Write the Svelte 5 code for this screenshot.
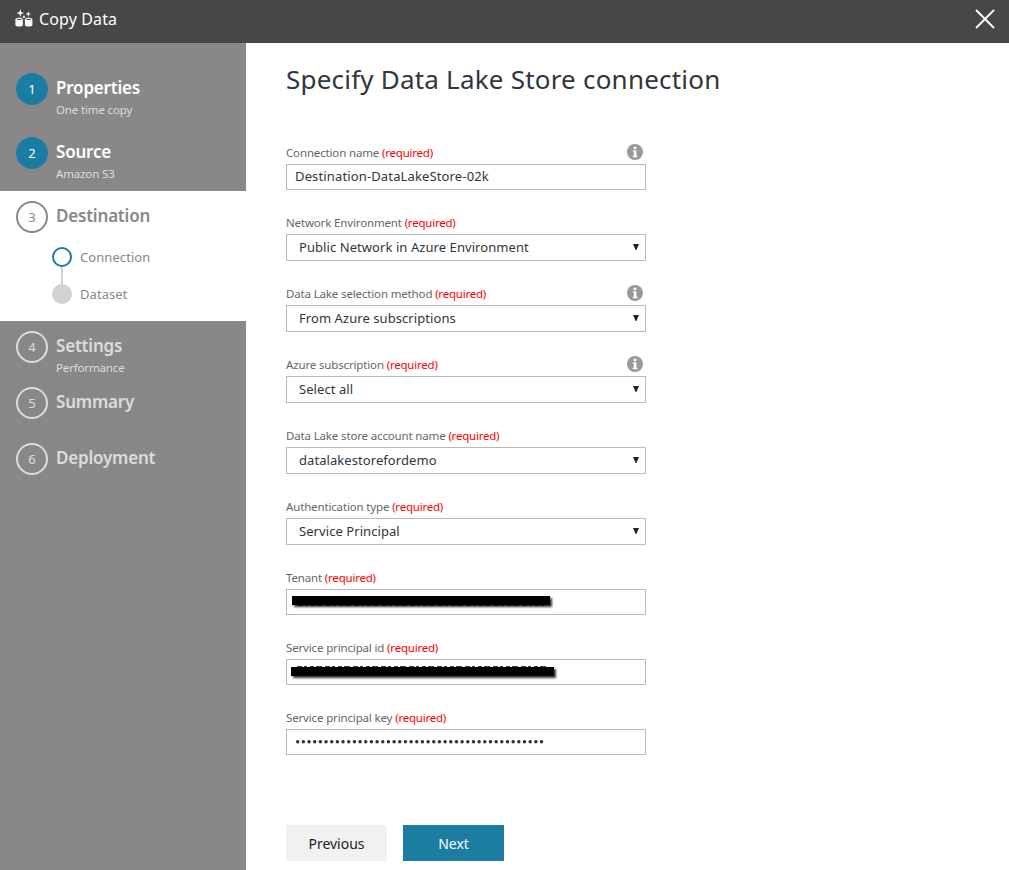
<script>
  const steps = [
    { n: 1, title: 'Properties', sub: 'One time copy', state: 'done' },
    { n: 2, title: 'Source', sub: 'Amazon S3', state: 'done' },
    { n: 3, title: 'Destination', state: 'current' },
    { n: 4, title: 'Settings', sub: 'Performance', state: 'todo' },
    { n: 5, title: 'Summary', state: 'todo' },
    { n: 6, title: 'Deployment', state: 'todo' }
  ];
  const fields = [
    { label: 'Connection name', kind: 'input', value: 'Destination-DataLakeStore-02k', info: true },
    { label: 'Network Environment', kind: 'select', value: 'Public Network in Azure Environment' },
    { label: 'Data Lake selection method', kind: 'select', value: 'From Azure subscriptions', info: true },
    { label: 'Azure subscription', kind: 'select', value: 'Select all', info: true },
    { label: 'Data Lake store account name', kind: 'select', value: 'datalakestorefordemo' },
    { label: 'Authentication type', kind: 'select', value: 'Service Principal' },
    { label: 'Tenant', kind: 'masked', x: 5, w: 258, y: 6, fringe: 15.4 },
    { label: 'Service principal id', kind: 'masked', x: 4, w: 263, y: 7, fringe: 6.5 },
    { label: 'Service principal key', kind: 'secret', value: 44 }
  ];
</script>

<div class="app">
  <header>
    <svg class="logo" width="18" height="19" viewBox="0 0 18 19" fill="#fff">
      <path d="M5.3 0 6.2 3 9.2 4 6.2 5 5.3 8 4.4 5 1.4 4 4.4 3z" />
      <path d="M13.3 2 14 4.2 16.2 5 14 5.8 13.3 8 12.6 5.8 10.4 5 12.6 4.2z" />
      <path d="M0.4 10.5C0.4 8.3 7.9 8.3 7.9 10.5V16C7.9 18 0.4 18 0.4 16z" />
      <path d="M9.9 10.5C9.9 8.3 17.4 8.3 17.4 10.5V16C17.4 18 9.9 18 9.9 16z" />
      <path d="M7.3 8.8 9 6 10.5 8.8z" />
      <path d="M2 10.4h4.4M11.5 10.4h4.4" stroke="#474747" stroke-width="1" />
    </svg>
    <span class="name">Copy Data</span>
    <svg class="close" width="20" height="20" viewBox="0 0 20 20" stroke="#fff" stroke-width="1.8"><path d="M1 1 19 19M19 1 1 19" /></svg>
  </header>
  <div class="body">
    <nav>
      {#each steps as s}
        <div class="step {s.state}" class:tall={s.n === 1 || s.n === 2}>
          <div class="num">{s.n}</div>
          <div class="txt">
            <div class="title">{s.title}</div>
            {#if s.sub}<div class="sub">{s.sub}</div>{/if}
          </div>
          {#if s.state === 'current'}
            <div class="subs">
              <div class="substep"><i class="dot on"></i>Connection</div>
              <i class="line"></i>
              <div class="substep"><i class="dot"></i>Dataset</div>
            </div>
          {/if}
        </div>
      {/each}
    </nav>
    <main>
      <h1>Specify Data Lake Store connection</h1>
      {#each fields as f}
        <div class="field">
          <div class="label">
            <span>{f.label} <em>(required)</em></span>
            {#if f.info}
              <svg width="16" height="16" viewBox="0 0 16 16"><circle cx="8" cy="8" r="8" fill="#999" /><path d="M6.6 2.8h2.8v2.2H6.6zM5.8 6.2h3.6v5.6h1v1.4H5.8v-1.4h1V7.5h-1z" fill="#fff" /></svg>
            {/if}
          </div>
          <div class="control {f.kind}">
            {#if f.kind === 'masked'}
              <svg width="358" height="24" viewBox="0 0 358 24">
                <rect x={f.x + 2} y={f.y + 2} width={f.w} height="9" class="shade" />
                <rect x={f.x} y={f.y} width={f.w} height="9" />
                <path d="M{f.x + 6} {f.fringe}H{f.x + f.w - 6}" stroke="#000" stroke-width="1.2" stroke-dasharray="5 2 3 3 4 2 6 3" opacity="0.75" />
              </svg>
            {:else if f.kind === 'secret'}
              <svg width="358" height="24" viewBox="0 0 358 24">
                {#each Array(f.value) as _, i}<circle cx={10.7 + i * 5.67} cy="11.7" r="1.7" fill="#293037" />{/each}
              </svg>
            {:else}
              <span>{f.value}</span>
              {#if f.kind === 'select'}<svg class="arrow" width="6" height="6" viewBox="0 0 6 6"><path d="M0 0H6L3.4 6H2.6z" fill="#222" /></svg>{/if}
            {/if}
          </div>
        </div>
      {/each}
      <div class="buttons"><button>Previous</button><button class="primary">Next</button></div>
    </main>
  </div>
</div>

<style>
  :global(body) { margin: 0; }
  .app { width: 1009px; height: 870px; overflow: hidden; display: flex; flex-direction: column; background: #fff; font-family: "Noto Sans", "Open Sans", sans-serif; color: #30363d; }
  header { height: 43px; flex: none; box-sizing: border-box; padding: 0 14px 5px 15px; background: #474747; color: #fff; display: flex; align-items: center; }
  .logo { margin-top: -2px; }
  .name { font-size: 16px; margin-left: 6px; letter-spacing: 0.12px; }
  .close { margin-left: auto; margin-top: -1px; }
  .body { flex: 1; display: flex; }
  nav { width: 246px; background: #888; padding-top: 20px; box-sizing: border-box; }
  .step { display: flex; flex-wrap: wrap; align-content: flex-start; height: 56px; padding: 10px 0 0 16px; box-sizing: border-box; color: #dcdcdc; }
  .step.tall { height: 64px; }
  .step.done { color: #fff; }
  .step.current { height: 130px; background: #fff; color: #888; }
  .num { width: 32px; height: 32px; box-sizing: border-box; border: 2px solid #dcdcdc; border-radius: 50%; display: flex; align-items: center; justify-content: center; font-size: 13px; }
  .done .num { background: #1b7da1; border-color: #1b7da1; }
  .current .num { border-color: #888; }
  .txt { margin-left: 8px; width: 180px; }
  .title { font-weight: 600; font-size: 17px; line-height: 30px; letter-spacing: -0.2px; }
  .sub { font-size: 11.5px; line-height: 14px; letter-spacing: -0.15px; color: #dcdcdc; }
  .subs { width: 100%; padding: 14px 0 0 36px; }
  .substep { display: flex; align-items: center; height: 20px; font-size: 13px; letter-spacing: 0.07px; gap: 8px; }
  .dot { width: 20px; height: 20px; box-sizing: border-box; border-radius: 50%; background: #d2d2d2; }
  .dot.on { background: #fff; border: 2px solid #1b7da1; }
  .line { display: block; width: 2px; height: 17px; margin-left: 9px; background: #d2d2d2; }
  main { padding-left: 40px; width: 360px; }
  h1 { margin: 0; padding-top: 16px; height: 81px; line-height: 40px; font-size: 26px; letter-spacing: 0.21px; font-weight: 400; white-space: nowrap; }
  .field { margin-bottom: 20px; }
  .label { height: 24px; display: flex; justify-content: space-between; padding: 0 3px 0 0; font-size: 11.5px; letter-spacing: -0.15px; line-height: 26px; color: #63676c; white-space: nowrap; }
  .label svg { margin-top: 4px; }
  em { font-style: normal; letter-spacing: -0.22px; color: #f00; }
  .control { height: 26px; box-sizing: border-box; border: 1px solid #b9babc; display: flex; align-items: center; font-size: 13px; letter-spacing: 0.07px; padding-left: 8px; }
  .control span { padding-bottom: 2px; }
  .control.input { letter-spacing: 0.14px; }
  .control.select { height: 27px; padding: 0 6px 0 12px; justify-content: space-between; }
  .control.masked, .control.secret { padding: 0; }
  .arrow { margin-top: -2px; }
  .shade { filter: blur(1px); opacity: 0.8; }
  .buttons { display: flex; gap: 16px; padding-top: 50px; }
  button { width: 101px; height: 36px; padding: 0; border: 0; background: #f1f1f1; color: #222; font: 14px "Noto Sans", sans-serif; }
  .buttons .primary { background: #1b7da1; color: #fff; }
</style>
